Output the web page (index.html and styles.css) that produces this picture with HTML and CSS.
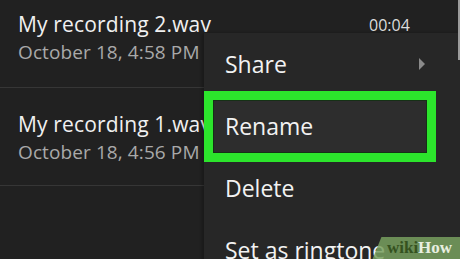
FILE: index.html
```html
<!DOCTYPE html>
<html lang="en">
<head>
  <meta charset="UTF-8">
  <meta name="viewport" content="width=device-width, initial-scale=1.0">
  <title>Recordings</title>
  <link rel="stylesheet" href="styles.css">
</head>
<body>
  <div class="screen">
    <div class="list">
      <div class="row first">
        <div class="title">My recording 2.wav</div>
        <div class="date">October 18, 4:58 PM</div>
        <span class="length">00:04</span>
      </div>
      <div class="row">
        <div class="title">My recording 1.wav</div>
        <div class="date">October 18, 4:56 PM</div>
      </div>
    </div>

    <div class="menu">
      <div class="highlight"></div>
      <div class="item">Share <span class="arrow"></span></div>
      <div class="item">Rename</div>
      <div class="item">Delete</div>
      <div class="item">Set as ringtone</div>
    </div>

    <div class="scrollbar"></div>

    <div class="watermark"><span class="wiki">wiki</span><span class="how">How</span></div>
  </div>
</body>
</html>
```

FILE: styles.css
```css
html, body {
  margin: 0;
  padding: 0;
}
body {
  font-family: "Open Sans", Arial, sans-serif;
  background-color: #212121;
}
.screen {
  position: relative;
  width: 460px;
  height: 259px;
  overflow: hidden;
  background-color: #212121;
}
.row {
  position: relative;
  height: 74px;
  padding: 23px 0 0 18px;
  border-bottom: 1px solid #363636;
}
.row.first {
  height: 76px;
  padding-top: 11px;
}
.title {
  font-size: 21px;
  line-height: 26px;
  letter-spacing: 0.15px;
  color: #f0f0f0;
  white-space: nowrap;
}
.date {
  margin-top: 3px;
  font-size: 19px;
  line-height: 24px;
  letter-spacing: 0.1px;
  color: #a9a9a9;
  white-space: nowrap;
}
.length {
  position: absolute;
  left: 369px;
  top: 14px;
  font-size: 16px;
  line-height: 22px;
  color: #dcdcdc;
}

/* popup menu */
.menu {
  position: absolute;
  left: 204px;
  top: 33px;
  width: 256px;
  height: 260px;
  background-color: #272727;
  box-shadow: -2px 0 3px rgba(0, 0, 0, 0.25);
}
.item {
  position: relative;
  height: 62px;
  display: flex;
  align-items: center;
  justify-content: space-between;
  padding: 0 35px 0 21px;
  font-size: 23px;
  line-height: 30px;
  color: #f2f2f2;
  white-space: nowrap;
}
.arrow {
  width: 0;
  height: 0;
  border-left: 6px solid #8a8a8a;
  border-top: 6px solid transparent;
  border-bottom: 6px solid transparent;
}
.highlight {
  position: absolute;
  left: 0;
  top: 58px;
  width: 214px;
  height: 53px;
  border: 9px solid #2ce52c;
  background-color: #2d2d2d;
  box-shadow: inset 0 0 0 1px #163016;
}

.scrollbar {
  position: absolute;
  right: 0;
  top: 0;
  width: 2px;
  height: 60px;
  background-color: #9c9c9c;
}

.watermark {
  position: absolute;
  right: -8px;
  bottom: 0;
  width: 81px;
  height: 22px;
  padding-left: 10px;
  background-color: rgba(120, 160, 95, 0.85);
  transform: skewX(-22deg);
  font-family: "Liberation Serif", serif;
  font-weight: bold;
  font-size: 17px;
  line-height: 22px;
  white-space: nowrap;
}
.watermark span {
  display: inline-block;
  transform: skewX(22deg);
}
.wiki {
  color: #35521f;
}
.how {
  color: #e8efe0;
}
```
